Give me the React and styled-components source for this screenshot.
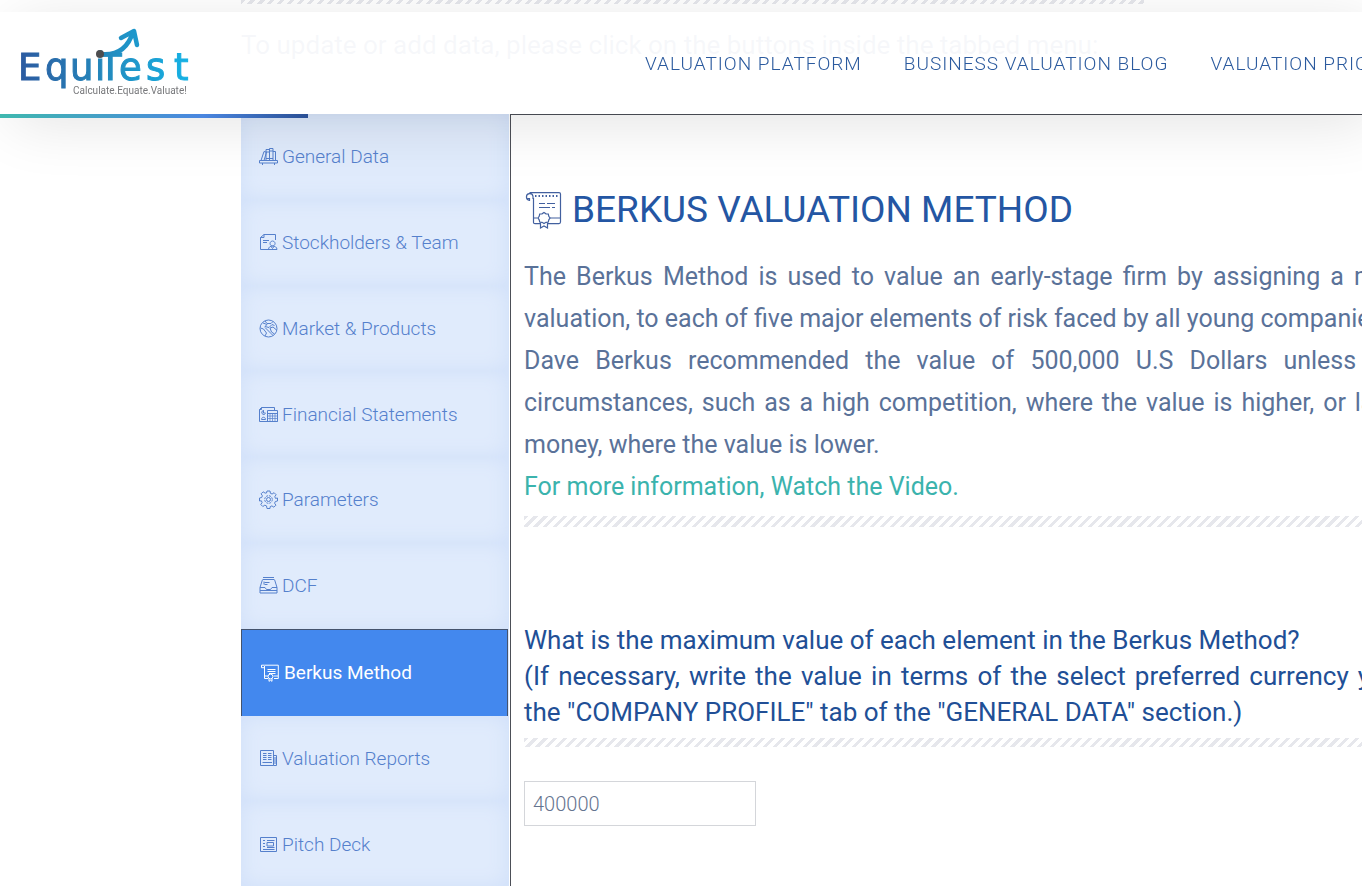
import React from "react";
import styled, { createGlobalStyle, css } from "styled-components";

const GlobalStyle = createGlobalStyle`
  * {
    box-sizing: border-box;
  }

  body {
    margin: 0;
    background: #fff;
    color: #5a7299;
    font-family: Roboto, "Liberation Sans", sans-serif;
    overflow: hidden;
  }
`;

const Header = styled.header`
  position: fixed;
  top: 12px;
  left: 0;
  right: 0;
  height: 102px;
  display: flex;
  align-items: center;
  justify-content: space-between;
  background: rgba(255, 255, 255, 0.93);
  box-shadow: 12px 10px 60px rgba(0, 0, 0, 0.11);
  z-index: 1;
`;

const Progress = styled.div`
  position: absolute;
  left: 0;
  bottom: -4px;
  width: 308px;
  height: 4px;
  background: linear-gradient(90deg, #3fb8af, #4a86e0 66%, #2a4f94);
`;

const LogoLink = styled.a`
  display: block;
  margin-left: 19px;
  line-height: 0;
`;

const Nav = styled.nav`
  flex: 0 0 717px;
  display: flex;
  gap: 42px;
  padding-top: 2px;
  overflow: hidden;
  white-space: nowrap;
`;

const NavLink = styled.a`
  color: #2b5a9e;
  font-size: 19px;
  font-weight: 300;
  line-height: 24px;
  letter-spacing: 1px;
  text-decoration: none;
  text-transform: uppercase;
`;

const Page = styled.main`
  padding-left: 241px;
`;

const Stripes = styled.div`
  height: ${props => props.$height}px;
  max-width: ${props => (props.$short ? "903px" : "none")};
  background: repeating-linear-gradient(
    135deg,
    #e6e7ec 0 3px,
    transparent 3px 7px
  );
`;

const Hint = styled.h2`
  margin: 23px 0 51px;
  color: #8393b0;
  font-size: 26px;
  font-weight: 400;
  line-height: 36px;
`;

const Tabs = styled.div`
  display: flex;
  min-height: 773px;
`;

const TabList = styled.div`
  flex: 0 0 269px;
  display: flex;
  flex-direction: column;
  padding-right: 1px;
  background: #d5e4fb;
  border-right: 1px solid #fff;
`;

const Tab = styled.button`
  flex: 1;
  display: flex;
  align-items: center;
  gap: 4px;
  padding: 0 18px;
  border: 0;
  background: #e0ebfc;
  box-shadow: inset 0 0 20px #cfdff9;
  color: #5580cc;
  font-family: inherit;
  font-size: 19px;
  font-weight: 300;
  text-align: left;

  ${props =>
    props.$active &&
    css`
      flex: 0 0 87px;
      padding: 0 19px;
      border: 1px solid #44536d;
      border-bottom: 0;
      background: #4388ee;
      box-shadow: none;
      color: #fff;
      font-weight: 400;
    `}
`;

const Panel = styled.section`
  flex: 1;
  min-width: 0;
  padding: 71px 0 0 13px;
  border: solid #4c4f57;
  border-width: 1px 0 0 1px;
  overflow: hidden;
`;

const Title = styled.h1`
  display: flex;
  align-items: center;
  gap: 10px;
  margin: 0 0 22px;
  color: #2456a3;
  font-size: 37px;
  font-weight: 400;
  line-height: 48px;
`;

const Text = styled.p`
  min-width: 905px;
  margin: 0;
  font-size: 25px;
  line-height: 42px;
`;

const Question = styled.label`
  display: block;
  min-width: 905px;
  margin: 95px 0 8px;
  color: #214f96;
  font-size: 26px;
  line-height: 36px;
`;

const Line = styled.span`
  display: block;
  width: 905px;
  text-align-last: ${props => (props.$last ? "left" : "justify")};
  white-space: nowrap;
`;

const VideoLink = styled.a`
  display: block;
  margin-bottom: 8px;
  color: #3bb3ad;
  font-size: 25px;
  line-height: 42px;
  text-decoration: none;
`;

const ValueInput = styled.input`
  display: block;
  width: 232px;
  height: 45px;
  margin-top: 34px;
  padding: 0 8px;
  border: 1px solid #d4d6da;
  background: #fff;
  color: #65748f;
  font-family: inherit;
  font-size: 20px;
  font-weight: 300;
`;

const Logo = () => (
  <svg width="180" height="76" viewBox="0 0 180 76" role="img" aria-label="EquiTest">
    <defs>
      <linearGradient id="brand" gradientUnits="userSpaceOnUse" x1="0" y1="0" x2="172" y2="0">
        <stop offset="0" stopColor="#2c5aa0" />
        <stop offset="0.5" stopColor="#2389bd" />
        <stop offset="1" stopColor="#14b3e6" />
      </linearGradient>
    </defs>
    <text
      x="-1 26 51 76 80 100 127 155"
      y="55"
      fill="url(#brand)"
      stroke="url(#brand)"
      fontFamily="DejaVu Sans"
      fontSize="37"
    >
      EquiTest
    </text>
    <path
      d="M81 29C98 31 109 23 114 7M102 13L115 6L118 20"
      fill="none"
      stroke="url(#brand)"
      strokeWidth="4.5"
      strokeLinecap="round"
      strokeLinejoin="round"
    />
    <circle cx="81" cy="29" r="4" fill="#4d4d4f" />
    <text x="54" y="69" fill="#77787b" fontFamily="Roboto" fontSize="10">
      Calculate.Equate.Valuate!
    </text>
  </svg>
);

const Icon = ({ children, size = 19 }) => (
  <svg
    width={size}
    height={size}
    viewBox="0 0 19 19"
    fill="none"
    stroke="currentColor"
    strokeWidth="1"
    aria-hidden="true"
  >
    {children}
  </svg>
);

const books = (
  <path d="M.5 13.5h18v2.5H.5zM3.5 16v2M15.5 16v2M2 13.5L5 4.5l2.5.7L5 13.5M7 13.5v-11h3.5v11M10.5 13.5V1.5h3.5v12M14 4.5h2.5v9M7 5h3.5M10.5 4H14M7 11.5h3.5M10.5 11.5H14" />
);

const stakeholders = (
  <>
    <path d="M16.5 7V1.5H5L1.5 4.5v12h16.5M1.5 4.5H5v-3M4 7.5h6M4 9.5h4" />
    <path d="M13.5 8a2.5 2.5 0 1 0 .1 0M9.5 16.5c0-2.5 2-3.5 4-3.5s4.500 1 4.500 3.500M12 13.5l1.5 2 1.5-2" />
  </>
);

const globe = (
  <>
    <circle cx="9.5" cy="9.5" r="8.5" />
    <path d="M6 2l2 2.5h4L14 2.5M4 4l4 1.5-2 2 4 1 3-3 2.5 1M1.5 9l3 1 3 4M6 8.5l6 6 2 2M11 9l3-1 3.5 3M11 9l1.5 4 3 2M7.5 14L6 17" />
  </>
);

const statements = (
  <>
    <path d="M.5 4.5h2v-2h13v3M.5 4.5v12h18M2.5 2.5L.5 4.5M8.5 5.5h10v11h-10zM8.5 8.5h10M4.5 6v2h2M5 5.5a2 2 0 1 0 1.5 3M2.5 14.5c0-3 4-3 4 0z" />
    <path d="M11 8.5v8M13.5 8.5v8M16 8.5v8M8.5 11h10M8.5 13.5h10" strokeOpacity="0.7" />
  </>
);

const gear = (
  <>
    <path d="M8 1h3l.4 2.3 1.7.7 2-1.3 2 2-1.3 2 .7 1.7L18.500 8v3l-2.200.5-.7 1.700 1.300 2-2 2-2-1.300-1.700.7L11 18.500H8l-.5-2.600-1.700-.7-2 1.300-2-2 1.300-2-.7-1.700L.5 11V8l2.200-.5.7-1.700-1.300-2 2-2 2 1.300L7.500 3z" />
    <circle cx="9.5" cy="9.5" r="3.8" strokeDasharray="2 1" />
    <circle cx="9.5" cy="9.5" r="2" />
  </>
);

const tray = (
  <path d="M4 1.5h11M4 3.5h11M3.5 3.5L1 11.5v5.5h17v-5.5l-2.5-8M5 5.5v3M5.5 6.5h5M5.5 8.5h3M1 11.5h5l1.5 2h4l1.5-2h5M1 14.5h17" />
);

const certificate = (
  <>
    <path d="M3.5 2.2h13.8v13.3H13M3.5 2.2H.5v2.5h3M3.5 3v12.5H7M6.5 6.5h8M6.5 8.5h8M8 10.5h6.5M3.5 13H7M12.5 13h4.8" />
    <circle cx="9.5" cy="13.5" r="2.4" />
    <path d="M8 15.5v2.8l1.5-1 1.5 1v-2.8" />
  </>
);

const newspaper = (
  <path d="M1.5 1.5h13v15h-13zM14.5 6.5h3v10h-3M16 8v7M4 4.5h3.5M4 6.5h3.5M4 8.5h3.5M4 10.5h3.5M9 4.5h3.5M9 6.5h3.5M9 8.5h3.5M9 10.5h3.5M3.5 13.5h9.5" />
);

const slides = (
  <path d="M1.5 2.5h16v14h-16zM4 5.5h2M8 5.5h7.5M4 8.5h2M8 7.5h6.5v3.5H8zM4 11.5h2M8 12.5h7.5M4 14.5h11.5" />
);

const ScrollIcon = () => (
  <svg
    width="38"
    height="38"
    viewBox="0 0 38 38"
    fill="none"
    stroke="#42609f"
    strokeWidth="1.2"
    aria-hidden="true"
  >
    <path d="M9 8V5.5A3.3 3.3 0 1 0 5.5 9.3V7.5H3.5M5.5 1.6h29.5q1.5 0 1.5 1.5v28q0 1.5-1.5 1.5H24M9.5 7v24.5q0 1.1 1.5 1.1h6M9.5 27h4M26 27h10.5" />
    <path d="M11 5h24" strokeWidth="2" strokeDasharray="1.5 2" />
    <path d="M15 12.5h6M23 12.5h8M15 16.5h11M28 16.5h3" />
    <path d="M20 21.5l2 1.3 2.3.2.5 2.3 1.2 1.7-1.2 1.8-.5 2.2-2.3.3-2 1.2-2-1.2-2.3-.3-.5-2.2L14 27l1.2-1.7.5-2.3 2.3-.2z" />
    <path d="M16.5 31.5V37l3.5-2 3.5 2v-5.5" />
  </svg>
);

const tabs = [
  { label: "General Data", icon: books },
  { label: "Stockholders & Team", icon: stakeholders },
  { label: "Market & Products", icon: globe },
  { label: "Financial Statements", icon: statements },
  { label: "Parameters", icon: gear },
  { label: "DCF", icon: tray },
  { label: "Berkus Method", icon: certificate, active: true },
  { label: "Valuation Reports", icon: newspaper },
  { label: "Pitch Deck", icon: slides }
];

const intro = [
  "The Berkus Method is used to value an early-stage firm by assigning a money",
  "valuation, to each of five major elements of risk faced by all young companies. Mr.",
  "Dave Berkus recommended the value of 500,000 U.S Dollars unless there",
  "circumstances, such as a high competition, where the value is higher, or lack in",
  "money, where the value is lower."
];

const question = [
  "What is the maximum value of each element in the Berkus Method?",
  "(If necessary, write the value in terms of the select preferred currency you in",
  'the "COMPANY PROFILE" tab of the "GENERAL DATA" section.)'
];

const App = () => (
  <>
    <GlobalStyle />
    <Header>
      <LogoLink href="#home">
        <Logo />
      </LogoLink>
      <Nav>
        <NavLink href="#platform">Valuation Platform</NavLink>
        <NavLink href="#blog">Business Valuation Blog</NavLink>
        <NavLink href="#pricing">Valuation Pricing</NavLink>
      </Nav>
      <Progress />
    </Header>
    <Page>
      <Stripes $height={4} $short />
      <Hint>
        To update or add data, please click on the buttons inside the tabbed menu:
      </Hint>
      <Tabs>
        <TabList role="tablist">
          {tabs.map(({ label, icon, active }) => (
            <Tab key={label} role="tab" aria-selected={!!active} $active={active}>
              <Icon>{icon}</Icon>
              {label}
            </Tab>
          ))}
        </TabList>
        <Panel role="tabpanel">
          <Title>
            <ScrollIcon />
            BERKUS VALUATION METHOD
          </Title>
          <Text>
            {intro.map((line, i) => (
              <Line key={line} $last={i === intro.length - 1}>
                {line}
              </Line>
            ))}
          </Text>
          <VideoLink href="#video">For more information, Watch the Video.</VideoLink>
          <Stripes $height={11} />
          <Question htmlFor="max-value">
            {question.map((line, i) => (
              <Line key={line} $last={i !== 1}>
                {line}
              </Line>
            ))}
          </Question>
          <Stripes $height={9} />
          <ValueInput id="max-value" type="text" defaultValue="400000" />
        </Panel>
      </Tabs>
    </Page>
  </>
);

export default App;
